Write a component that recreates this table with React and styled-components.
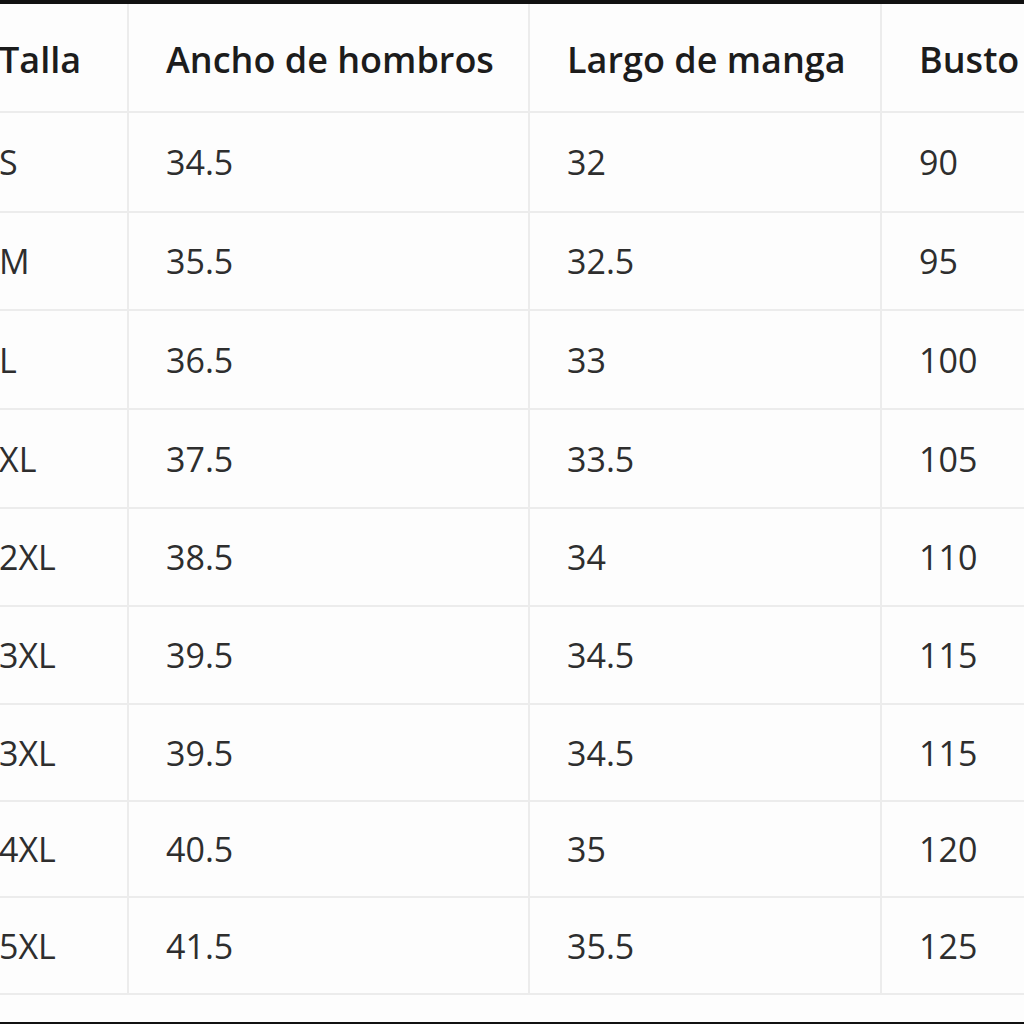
import React from 'react';
import styled, { createGlobalStyle } from 'styled-components';

const GlobalStyle = createGlobalStyle`
  html, body {
    margin: 0;
    padding: 0;
    background: #fdfdfd;
  }
  body {
    font-family: "Open Sans", "Noto Sans", "Liberation Sans", sans-serif;
    overflow: hidden;
  }
`;

const Page = styled.div`
  width: 1024px;
  height: 1024px;
  box-sizing: border-box;
  border-top: 4px solid #111;
  border-bottom: 2px solid #111;
  background: #fdfdfd;
  overflow: hidden;
`;

const Table = styled.div`
  margin-left: -38px;
  width: 1100px;
  display: flex;
  flex-direction: column;
`;

const Row = styled.div`
  display: grid;
  grid-template-columns: 165px 401px 352px 1fr;
  height: ${p => p.$height}px;
  box-sizing: border-box;
  border-bottom: 2px solid #ececec;
`;

const Cell = styled.div`
  display: flex;
  align-items: center;
  padding-left: 37px;
  padding-top: ${p => (p.$head ? '4px' : '0')};
  font-size: ${p => (p.$head ? '36px' : '34px')};
  font-weight: ${p => (p.$head ? 600 : 400)};
  color: ${p => (p.$head ? '#1c1c1c' : '#2e2e2e')};
  & + & {
    border-left: 2px solid #ececec;
  }
`;

const headers = ['Talla', 'Ancho de hombros', 'Largo de manga', 'Busto'];

const rows = [
  ['S', '34.5', '32', '90'],
  ['M', '35.5', '32.5', '95'],
  ['L', '36.5', '33', '100'],
  ['XL', '37.5', '33.5', '105'],
  ['2XL', '38.5', '34', '110'],
  ['3XL', '39.5', '34.5', '115'],
  ['3XL', '39.5', '34.5', '115'],
  ['4XL', '40.5', '35', '120'],
  ['5XL', '41.5', '35.5', '125'],
];

const rowHeights = [100, 98, 99, 99, 98, 98, 97, 96, 97];

export default function App() {
  return (
    <Page>
      <GlobalStyle />
      <Table>
        <Row $height={109}>
          {headers.map(h => (
            <Cell key={h} $head>{h}</Cell>
          ))}
        </Row>
        {rows.map((r, i) => (
          <Row key={i} $height={rowHeights[i]}>
            {r.map((v, j) => (
              <Cell key={j}>{v}</Cell>
            ))}
          </Row>
        ))}
      </Table>
    </Page>
  );
}
